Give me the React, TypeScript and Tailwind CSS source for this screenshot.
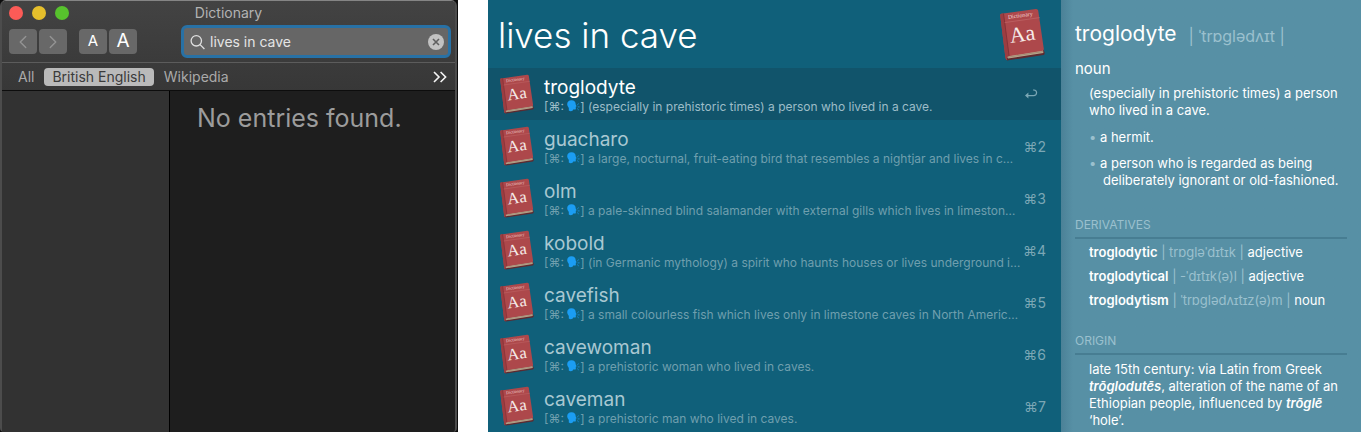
import { ChevronLeft, ChevronRight } from "lucide-react";

type Entry = { word: string; definition: string };

const entries: Entry[] = [
  { word: "troglodyte", definition: "(especially in prehistoric times) a person who lived in a cave." },
  { word: "guacharo", definition: "a large, nocturnal, fruit-eating bird that resembles a nightjar and lives in c…" },
  { word: "olm", definition: "a pale-skinned blind salamander with external gills which lives in limeston…" },
  { word: "kobold", definition: "(in Germanic mythology) a spirit who haunts houses or lives underground i…" },
  { word: "cavefish", definition: "a small colourless fish which lives only in limestone caves in North Americ…" },
  { word: "cavewoman", definition: "a prehistoric woman who lived in caves." },
  { word: "caveman", definition: "a prehistoric man who lived in caves." },
];

const derivatives = [
  { word: "troglodytic", sound: "| trɒɡləˈdɪtɪk |", kind: "adjective" },
  { word: "troglodytical", sound: "| -ˈdɪtɪk(ə)l |", kind: "adjective" },
  { word: "troglodytism", sound: "| ˈtrɒɡlədʌɪtɪz(ə)m |", kind: "noun" },
];

function Book({ className }: { className: string }) {
  return (
    <svg viewBox="0 0 45 53" className={className} aria-hidden="true">
      <path d="M7 52.5 L43.5 47 Q45 46.5 44.5 44 L43 41 L5 48 Z" fill="#5d2a30" />
      <path d="M6.5 48 L43 42 L43.4 45 L8 50.6 Z" fill="#b9a68c" />
      <path d="M7 49.3 L43.2 43.5" stroke="#8a7460" strokeWidth="0.5" />
      <path d="M0.2 7 Q0.2 6 1.3 5.8 L35.8 1 Q37.8 0.8 38.2 2.6 L43.8 40.8 Q44 42.4 42.4 42.7 L8 48.2 Q6.6 48.6 7 51 L7.2 52.3 Q5.8 51.8 5.4 49.4 Z" fill="#ad484b" />
      <path d="M0.2 7 Q0.2 6 1.3 5.8 L3.6 5.5 L9.2 48 L7.6 48.4 Q6.6 49 7 51 L7.2 52.3 Q5.8 51.8 5.4 49.4 Z" fill="#9c3d41" />
      <path d="M3.5 5.5 L9.1 47.8" stroke="#7f2d34" strokeWidth="0.8" />
      <path d="M4.6 14.6 L39.8 9.6" stroke="#c87474" strokeWidth="0.5" />
      <text transform="translate(8.2 11) rotate(-8)" fontFamily="Liberation Serif, serif" fontSize="5.8" fill="#f3d9d6">Dictionary</text>
      <text transform="translate(10.6 35) rotate(-8)" fontFamily="Liberation Serif, serif" fontSize="22" fill="#f6ebe8">Aa</text>
    </svg>
  );
}

function SpeakingHead() {
  return (
    <svg viewBox="0 0 13 12" className="inline-block h-3 w-[13px] align-[-1px]" aria-hidden="true">
      <path d="M4.4 0.2 C1.8 0.2 0 2 0.2 4.6 C0.3 6.3 1.4 7 1.8 8 V10.6 Q3.6 11.8 5.8 10.6 L6.2 9.6 H7.8 C8.8 9.6 9 9.1 8.8 8.2 L8.8 6.8 L9.6 6.3 L8.7 4.6 C8.8 2 7.4 0.2 4.4 0.2 Z" fill="#1b9df3" />
      <path d="M10.2 5 L11.8 3.6 M10.6 6.9 H12.6 M10.2 8.6 L11.8 10" stroke="#1789d0" strokeWidth="1" />
    </svg>
  );
}

function ReturnIcon() {
  return (
    <svg viewBox="0 0 14 12" className="h-3 w-3.5" fill="none" stroke="currentColor" strokeWidth="1.2" aria-label="Return">
      <path d="M9 2 H10 Q12.6 2.2 12.6 4.8 Q12.4 7.6 9.6 7.6 H3" />
      <path d="M4.4 4.6 L1 7.6 L4.4 10.6 Z" fill="currentColor" stroke="none" />
    </svg>
  );
}

function DictionaryWindow() {
  const tool = "flex h-[25px] w-7 items-center justify-center rounded bg-[#686868]";
  return (
    <div className="flex w-[458px] shrink-0 bg-[#0c0c0c] pr-px">
      <section className="flex min-w-0 flex-1 flex-col rounded-t-md rounded-b border-x-2 border-t border-[#4c4c4c] border-t-[#858585] bg-[#1e1e1e]">
        <header className="rounded-t bg-linear-to-b from-[#434343] to-[#373737]">
          <div className="grid h-6 grid-cols-[1fr_auto_1fr] items-center px-[7px]">
            <div className="flex gap-[9px]">
              <button aria-label="Close" className="size-3.5 rounded-full bg-[#fc5b57]" />
              <button aria-label="Minimise" className="size-3.5 rounded-full bg-[#e5bf2c]" />
              <button aria-label="Zoom" className="size-3.5 rounded-full bg-[#57c22d]" />
            </div>
            <h1 className="text-[14px] leading-6 text-[#b3b3b3]">Dictionary</h1>
          </div>
          <div className="flex h-[38px] items-start justify-between border-b border-[#5c5c5c] pr-1 pl-[7px]">
            <div className="flex gap-3 pt-1">
              <div className="flex gap-0.5 text-[#949494]">
                <button aria-label="Back" className={tool}><ChevronLeft size={22} strokeWidth={1.5} /></button>
                <button aria-label="Forward" className={tool}><ChevronRight size={22} strokeWidth={1.5} /></button>
              </div>
              <div className="flex gap-0.5 text-white">
                <button aria-label="Smaller text" className={tool + " text-[15px]"}>A</button>
                <button aria-label="Larger text" className={tool + " text-[19px]"}>A</button>
              </div>
            </div>
            <label className="flex h-[33px] w-[270px] items-center gap-1 rounded-md border-[3px] border-[#2871a5] bg-[#666] pr-1 pl-1.5">
              <svg viewBox="0 0 16 16" className="size-4 shrink-0" fill="none" stroke="#e0e0e0" strokeWidth="1.3" aria-hidden="true">
                <circle cx="6.3" cy="6.8" r="5.2" />
                <path d="M10.1 10.6 L14.4 15" />
              </svg>
              <input aria-label="Search" defaultValue="lives in cave" className="min-w-0 flex-1 bg-transparent text-sm text-[#e4e4e4] outline-none" />
              <button aria-label="Clear search">
                <svg viewBox="0 0 16 16" className="size-4" aria-hidden="true">
                  <circle cx="8" cy="8" r="8" fill="#c2c2c2" />
                  <path d="M5 5 L11 11 M11 5 L5 11" stroke="#5f5f5f" strokeWidth="1.6" />
                </svg>
              </button>
            </label>
          </div>
          <nav className="flex h-7 items-center border-b border-[#0d0d0d] px-2 text-[14px] leading-[18px] text-[#aaa]">
            <button className="px-2">All</button>
            <button className="ml-0.5 rounded bg-[#bababa] px-2 text-[#3b3b3b]">British English</button>
            <button className="ml-0.5 px-2">Wikipedia</button>
            <button aria-label="More" className="ml-auto">
              <svg viewBox="0 0 14 12" className="h-3 w-3.5" fill="none" stroke="#f5f5f5" strokeWidth="1.6" aria-hidden="true">
                <path d="M1 1 L6 6 L1 11 M7.6 1 L12.6 6 L7.6 11" />
              </svg>
            </button>
          </nav>
        </header>
        <div className="flex flex-1">
          <aside className="w-[168px] border-r border-black bg-[#323232]" />
          <p className="flex-1 pt-[9px] pl-[27px] text-[25px] leading-9 text-[#9c9c9c]">No entries found.</p>
        </div>
      </section>
    </div>
  );
}

function Launcher() {
  return (
    <section className="min-w-0 flex-1 bg-[#10607a]">
      <div className="flex h-[68px] items-center pr-4 pl-2.5">
        <input aria-label="Launcher search" defaultValue="lives in cave" className="min-w-0 flex-1 bg-transparent pt-0.5 text-[35px] leading-[44px] font-light text-white outline-none" />
        <Book className="h-[53px] w-[45px]" />
      </div>
      <ul>
        {entries.map((entry, i) => (
          <li key={entry.word} className={"flex h-[52px] items-center pr-[15px] pl-3 " + (i === 0 ? "bg-[#11546b]" : "")}>
            <Book className="h-10 w-[34px] shrink-0" />
            <div className="ml-2.5 min-w-0 flex-1">
              <h2 className={"pt-0.5 text-[19px] leading-6 " + (i === 0 ? "text-white" : "text-[#a9c8d2]")}>{entry.word}</h2>
              <p className={"text-[12px] leading-[14px] whitespace-nowrap " + (i === 0 ? "text-[#9dbdc8]" : "text-[#6f9fae]")}>
                [⌘: <SpeakingHead />] {entry.definition}
              </p>
            </div>
            <span className="flex w-6 shrink-0 justify-end text-[14px] whitespace-nowrap text-[#7ba7b5]">
              {i === 0 ? <span className="mr-2"><ReturnIcon /></span> : `⌘${i + 1}`}
            </span>
          </li>
        ))}
      </ul>
    </section>
  );
}

function Definition() {
  const heading = "border-b-2 border-[#477d92] text-[12px] leading-6 text-[#9bc0ce]";
  return (
    <article className="w-[300px] shrink-0 bg-[#5790a5] bg-linear-to-r from-[#4b8197] to-[#5790a5] to-[12px] pr-3.5 pl-3.5 text-[13px] leading-[17px] text-white">
      <h2 className="flex items-center gap-3 pt-[18px] text-[21px] leading-8">
        troglodyte <span className="pt-1 text-[16px] leading-7 text-[#9bc0ce]">| ˈtrɒɡlədʌɪt |</span>
      </h2>
      <h3 className="pt-2 text-[15px] leading-[22px]">noun</h3>
      <div className="pt-[5px] pl-3.5">
        <p>(especially in prehistoric times) a person who lived in a cave.</p>
        <ul className="space-y-[9px] pt-2.5 pl-3.5">
          <li className="-indent-3.5"><span className="text-[#9bc0ce]">•</span> a hermit.</li>
          <li className="-indent-3.5"><span className="text-[#9bc0ce]">•</span> a person who is regarded as being deliberately ignorant or old-fashioned.</li>
        </ul>
      </div>
      <h3 className={heading + " mt-6"}>DERIVATIVES</h3>
      <ul className="space-y-[7px] pt-[5px] pl-3.5 whitespace-nowrap">
        {derivatives.map((d) => (
          <li key={d.word}>
            <b className="font-semibold">{d.word}</b> <span className="text-[#9bc0ce]">{d.sound}</span> {d.kind}
          </li>
        ))}
      </ul>
      <h3 className={heading + " mt-5"}>ORIGIN</h3>
      <p className="pt-1.5 pl-3.5">
        late 15th century: via Latin from Greek <b className="font-semibold italic">trōglodutēs</b>, alteration of the name of an
        Ethiopian people, influenced by <b className="font-semibold italic">trōglē</b> ‘hole’.
      </p>
    </article>
  );
}

export default function App() {
  return (
    <main className="flex bg-white font-['Inter','Liberation_Sans',sans-serif]">
      <DictionaryWindow />
      <div className="ml-[30px] flex min-w-0 flex-1">
        <Launcher />
        <Definition />
      </div>
    </main>
  );
}
